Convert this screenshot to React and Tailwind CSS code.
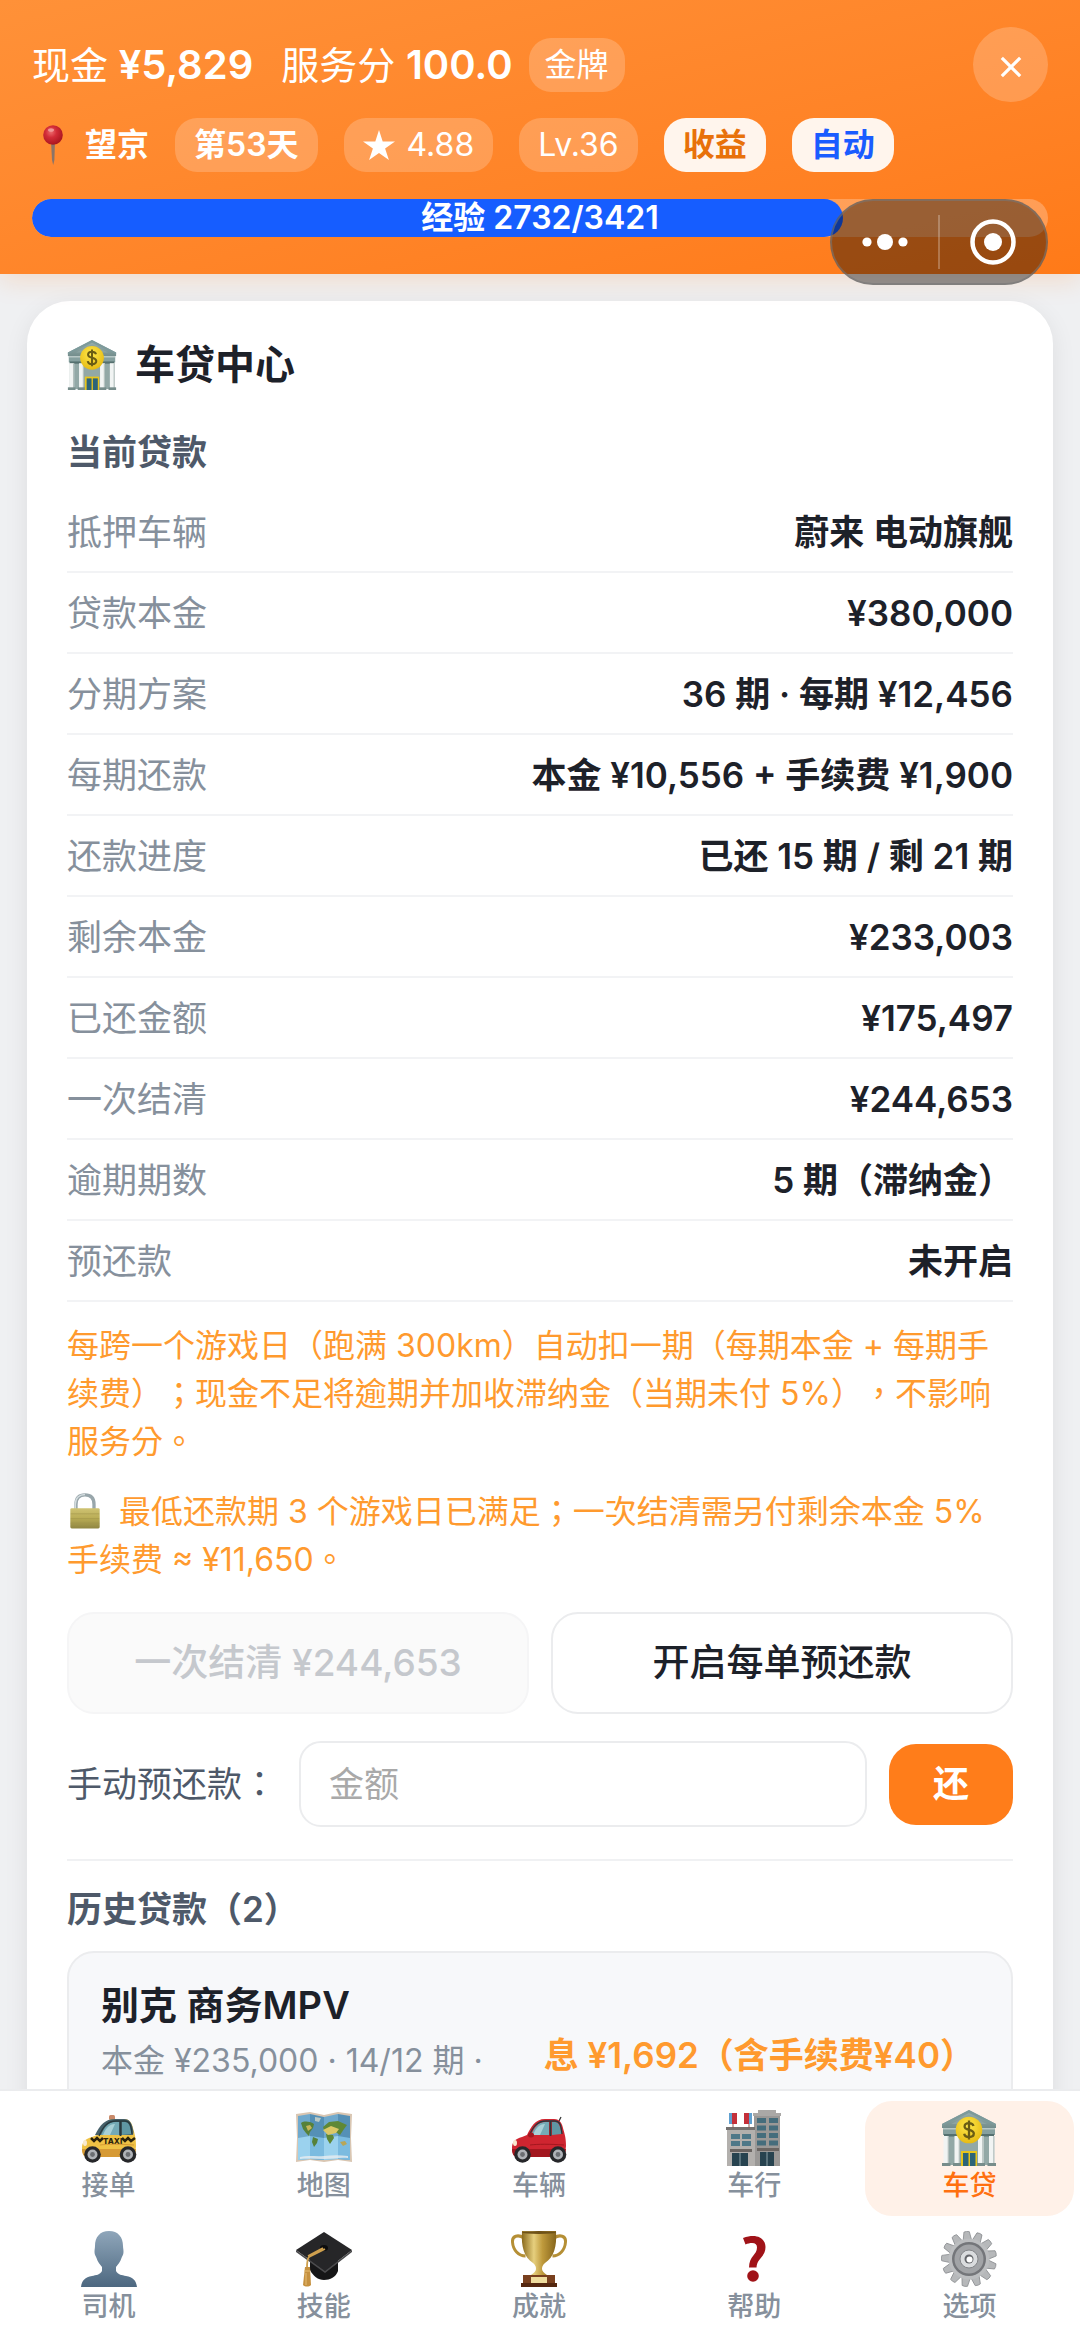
const loanRows = [
  ['抵押车辆', '蔚来 电动旗舰'],
  ['贷款本金', '¥380,000'],
  ['分期方案', '36 期 · 每期 ¥12,456'],
  ['每期还款', '本金 ¥10,556 + 手续费 ¥1,900'],
  ['还款进度', '已还 15 期 / 剩 21 期'],
  ['剩余本金', '¥233,003'],
  ['已还金额', '¥175,497'],
  ['一次结清', '¥244,653'],
  ['逾期期数', '5 期（滞纳金）'],
  ['预还款', '未开启'],
];

function PinIcon() {
  return (
    <svg viewBox="0 0 20 44" className="h-11 w-5" aria-hidden="true">
      <defs>
        <radialGradient id="pinHead" cx="40%" cy="35%" r="70%">
          <stop offset="0" stopColor="#ec6a6c" />
          <stop offset="0.4" stopColor="#d32c38" />
          <stop offset="1" stopColor="#a5121c" />
        </radialGradient>
      </defs>
      <path d="M8 18h4l-.6 19-1.200 5-1.200-5z" fill="#8a7468" />
      <circle cx="10" cy="12" r="9.800" fill="url(#pinHead)" />
      <ellipse cx="8" cy="7" rx="3" ry="1.800" fill="#f7b4b2" opacity=".7" />
    </svg>
  );
}

function StarIcon() {
  return (
    <svg viewBox="0 0 32 30" className="h-[30px] w-8" fill="currentColor" aria-hidden="true">
      <path d="m16 0 3.700 11.500H32l-9.900 7.100L25.900 30 16 23l-9.900 7 3.800-11.400L0 11.500h12.300z" />
    </svg>
  );
}

function BankIcon({ className }) {
  return (
    <svg viewBox="0 0 56 56" className={className} aria-hidden="true">
      <defs>
        <linearGradient id="bankWall" x1="0" y1="0" x2="0" y2="1">
          <stop offset="0" stopColor="#9db3b2" />
          <stop offset="1" stopColor="#748e8d" />
        </linearGradient>
        <radialGradient id="bankCoin" cx="45%" cy="35%" r="65%">
          <stop offset="0" stopColor="#ffe84a" />
          <stop offset="1" stopColor="#e6bb14" />
        </radialGradient>
      </defs>
      <path d="M28 0 55 14v4H1v-4z" fill="url(#bankWall)" />
      <path d="M28 0 55 14v2L28 3 1 16v-2z" fill="#7d9a9b" />
      <path d="M28 5 46 14H10z" fill="#8ba3a2" />
      <rect x="2" y="18" width="52" height="7" fill="#86a09f" />
      <path d="M2 18h52v1.500H2z" fill="#b7c7c5" />
      <rect x="3" y="25" width="50" height="30" fill="#92a8a6" />
      <rect x="3" y="24" width="50" height="2.500" fill="#55706f" />
      {[2.500, 13.500, 37, 48].map((x) => (
        <g key={x}>
          <rect x={x} y="26" width="5.500" height="28" fill="#f1f4f3" />
          <rect x={x + 4.200} y="26" width="1.300" height="28" fill="#b4c0be" />
          <rect x={x - 1.500} y="53" width="8.500" height="3" fill="#778d8b" />
        </g>
      ))}
      <rect x="20" y="41" width="16" height="15" fill="#e8c51c" />
      <rect x="22" y="43" width="5.500" height="13" fill="#2c6478" />
      <rect x="29" y="43" width="5.500" height="13" fill="#2c6478" />
      <circle cx="28" cy="20" r="13.300" fill="url(#bankCoin)" />
      <path d="M32.500 16c-.6-2-2.200-2.900-4.500-2.900-2.600 0-4.400 1.300-4.400 3.400 0 4.500 9.200 2.400 9.200 7.100 0 2.200-2 3.500-4.700 3.500s-4.500-1.200-4.900-3.400M28 10.500v19" fill="none" stroke="#6a5c14" strokeWidth="2.300" />
    </svg>
  );
}

function LockIcon() {
  return (
    <svg viewBox="0 0 32 38" className="mr-4 inline-block size-9 align-[-6px]" aria-hidden="true">
      <defs>
        <linearGradient id="lockBody" x1="0" y1="0" x2="0" y2="1">
          <stop offset="0" stopColor="#cfc373" />
          <stop offset="0.500" stopColor="#b9ac55" />
          <stop offset="1" stopColor="#8f8541" />
        </linearGradient>
      </defs>
      <path d="M6.500 18V12C6.500 5 10.500 2 16 2s9.500 3 9.500 10v6" fill="none" stroke="#98a6ab" strokeWidth="3.500" />
      <path d="M5.800 18V12C5.800 5 10 1.600 16 1.600" fill="none" stroke="#d3dcdf" strokeWidth="1.500" />
      <rect x="0.500" y="16" width="31" height="21.500" rx="1.500" fill="url(#lockBody)" />
      <path d="M1 22h30M1 27h30M1 32h30" stroke="#a0944a" strokeWidth="1" opacity=".6" />
    </svg>
  );
}

function CarIcon({ body, shade, taxi }) {
  return (
    <svg viewBox="0 0 56 56" className="size-14" aria-hidden="true">
      {taxi && <rect x="28" y="5" width="6" height="5" rx="1.500" fill="#c98a6a" />}
      {!taxi && <path d="m47 13 3-6" stroke="#333" strokeWidth="1.200" />}
      <path d="M1 38c0-6 3-9 10-11l5-2c4-8 8-16 18-16h9c6 0 8 4 9.500 11 1.500 5 2.500 9 2.500 16l-1 8c0 2-1 3-3 3H6c-3 0-5-4-5-9z" fill={body} />
      <path d="M1 39h54l-1 5c0 2-1 3-3 3H6c-3 0-5-3-5-8z" fill={shade} />
      {taxi && <path d="M14 25C19 15 24 9 34 9h9c6 0 8 4 9.500 13l-.5 3z" fill="#46606a" />}
      <path d="M20 25c3-7 7-13 14-13h4v13z" fill="#74aab6" />
      <path d="M22 25c3-7 6-11 12-11l-5 11z" fill="#a9d0d6" />
      <path d="M41 12h3c4 0 5 4 6.500 12l-9.500 1z" fill="#5f97a4" />
      <path d="M18 26c4-9 8-15 17-15h9c5 0 6 4 7 13" fill="none" stroke="#26393e" strokeWidth="1.300" />
      <path d="M39.500 11v15" stroke="#26393e" strokeWidth="1.800" />
      {taxi && (
        <g>
          <path d="m10 28 3 3 3-3 3 3 3-3M41 28l3 3 3-3 3 3 4-3" fill="none" stroke="#2b220b" strokeWidth="2.500" />
          <text x="22" y="34" fontSize="8" fontWeight="800" fill="#2b220b" fontFamily="Inter, sans-serif">TAXI</text>
        </g>
      )}
      <path d="M19 35c8-1 20-1 34 0" stroke={shade} fill="none" strokeWidth="1" />
      {!taxi && <ellipse cx="20" cy="25" rx="3" ry="2.500" fill={shade} />}
      <ellipse cx="4" cy="33" rx="2" ry="3" fill="#f8ead0" />
      {[11.500, 47].map((cx) => (
        <g key={cx}>
          <circle cx={cx} cy="44.500" r="8.300" fill="#26272a" />
          <circle cx={cx} cy="44.500" r="5" fill="#b0b3b8" />
          <circle cx={cx} cy="44.500" r="2.400" fill="#6b6e73" />
        </g>
      ))}
    </svg>
  );
}

function MapIcon() {
  return (
    <svg viewBox="0 0 56 56" className="size-14" aria-hidden="true">
      <path d="m0 4 14-2 14 3 14-3 14 2-1 24 1 24-14-2-14 2-14-2-14 2 1-24z" fill="#d9c6b2" />
      <path d="m2 6 12-2v45L2 50zM28 7l14-3v45l-14 1z" fill="#6fa9cd" />
      <path d="m14 4 14 3v43l-14-1zM42 4l12 2v44l-12-1z" fill="#5590b6" />
      <path d="m2 28 12-2v23L2 50zM28 28l14-2v23l-14 1z" fill="#9bd2ee" />
      <path d="m14 26 14 2v22l-14-1zM42 26l12 2v22l-12-1z" fill="#7bbbe0" />
      <path d="M5 13c3-2 8-2 13 1l-1 4-3 4-1 4-3-3-3-4zM17 27l5 2-1 4-3 4-2-5z" fill="#56813a" />
      <path d="m19 7 6 1-2 4-4-1z" fill="#b9c9c6" />
      <path d="m27 17 6-5 9-1 9 4-3 4-4 6-3-2-3-2-6 1-4-2zM30 24l7 1 1 3-4 6-3-5z" fill="#5f8836" />
      <path d="m44 32 5-1 2 3-4 2z" fill="#b8a657" />
      <path d="m27 20 8-4 8 3-3 4-8 2z" fill="#dcc867" />
      <path d="m10 16 4-1 2 3-4 3z" fill="#c6b558" />
      <path d="M4 47c8-2 16 0 24-1s16-1 24 0v2c-8-1-16 1-24 1s-16-1-24 0z" fill="#e8eef0" opacity=".8" />
    </svg>
  );
}

function StoreIcon() {
  return (
    <svg viewBox="0 0 56 56" className="size-14" aria-hidden="true">
      <rect x="28" y="3" width="26" height="53" fill="#9a9896" />
      <path d="M27 3h28v3H27zM32 0h18v3H32z" fill="#aaa8a6" />
      <rect x="1" y="19" width="28" height="37" fill="#b3b0ad" />
      <path d="M0 17h29v3H0z" fill="#74716f" />
      <path d="M3 3h23v11H3z" fill="#fff" />
      <path d="M3 3h3v11H3zM23 3h3v11h-3z" fill="#5fa0d0" />
      <path d="M6 3h5v11H6zM18 3h5v11h-5z" fill="#c4303a" />
      <path d="M7 14v4M23 14v4" stroke="#8b5a55" />
      {[8, 15.500, 23, 30.500].map((y) => (
        <path key={y} d={`M31 ${y}h9v5h-9zM43 ${y}h9v5h-9z`} fill="#456d7c" />
      ))}
      {[24, 31].map((y) => (
        <path key={y} d={`M5 ${y}h9v5H5zM16 ${y}h9v5h-9z`} fill="#4e7888" />
      ))}
      <path d="M4 39h22v3H4zM31 38h22v3H31z" fill="#6a6562" />
      <path d="M6 43h16v13H6zM34 42h14v14H34z" fill="#27434f" />
      <path d="M14 43v13M41 42v14" stroke="#8ea4ab" />
    </svg>
  );
}

function PersonIcon() {
  return (
    <svg viewBox="0 0 56 56" className="size-14" aria-hidden="true">
      <defs>
        <linearGradient id="person" x1="0" y1="0" x2="0" y2="1">
          <stop offset="0" stopColor="#8fa6ba" />
          <stop offset="1" stopColor="#4d6880" />
        </linearGradient>
      </defs>
      <path d="M28 0c9 0 14 6 14 15 0 2 .5 3 .5 6s-1.500 4-2 6c-1 4-4 7-5.500 9v4c2 4 6 4 10 5 7 1.500 10 4 11 11H0c1-7 4-9.500 11-11 4-1 8-1 10-5v-4c-1.500-2-4.500-5-5.500-9-.5-2-2-3-2-6s.5-4 .5-6c0-9 5-15 14-15z" fill="url(#person)" />
    </svg>
  );
}

function CapIcon() {
  return (
    <svg viewBox="0 0 56 56" className="size-14" aria-hidden="true">
      <path d="M14 25v14c3 6 8 10 14 10s12-3 14-9V23z" fill="#161617" />
      <path d="M28 1 56 19 29 40 0 19z" fill="#262628" />
      <path d="m0 19 29 21 27-21v2L29 42 0 21z" fill="#4b4b4d" />
      <ellipse cx="28" cy="17" rx="4" ry="3" fill="#0c0c0d" />
      <path d="M29 18 13 26c-2 2-2 7-2 11M27 17 12 25" fill="none" stroke="#cfa04e" strokeWidth="1.800" />
      <path d="M9 36h5l1 18c-2 2-6 2-8 0z" fill="#c6913f" />
      <path d="M8 40h6M10 42v12" stroke="#e6bd74" />
    </svg>
  );
}

function TrophyIcon() {
  return (
    <svg viewBox="0 0 56 56" className="size-14" aria-hidden="true">
      <defs>
        <linearGradient id="cup" x1="0" y1="0" x2="1" y2="0">
          <stop offset="0" stopColor="#8a6a1c" />
          <stop offset="0.350" stopColor="#e6cf7e" />
          <stop offset="0.600" stopColor="#bf9a3c" />
          <stop offset="1" stopColor="#86651b" />
        </linearGradient>
      </defs>
      <path d="M13 7C7 3 1 5 1.500 11c.5 8 6 14 13 14M43 7c6-4 12-2 11.500 4-.5 8-6 14-13 14" fill="none" stroke="#b58f35" strokeWidth="3" />
      <path d="M11 0h34c1 16-2 26-11 32-2 2-3 3-3 6 0 2 2 4 5 6H20c3-2 5-4 5-6 0-3-1-4-3-6C13 26 10 16 11 0z" fill="url(#cup)" />
      <ellipse cx="28" cy="1.500" rx="17" ry="1.500" fill="#6e5218" />
      <path d="M12 44h32v9H12z" fill="#79401e" />
      <path d="M10 52h36v4H10z" fill="#54270f" />
      <path d="M20 46h16v6H20z" fill="#efdc9d" />
    </svg>
  );
}

function QuestionIcon() {
  return (
    <svg viewBox="0 0 56 56" className="size-14" aria-hidden="true">
      <path d="M17 7c4-1.500 7-2 10-2 8 0 12.500 5 12.500 11 0 10-8.500 11-9 20.500h-7.500C23 25 31 24 31 16.500c0-3-1.500-4.500-5-4.500-2 0-4.500.5-6.500 1.500z" fill="#a01318" />
      <circle cx="27" cy="45" r="5.800" fill="#a01318" />
    </svg>
  );
}

function GearIcon() {
  return (
    <svg viewBox="0 0 56 56" className="size-14" aria-hidden="true">
      {Array.from({ length: 13 }, (_, i) => (
        <path key={i} d="M23.500 11 25.300.8q2.700-1 5.400 0L32.500 11z" fill="#b6b8ba" stroke="#8b8e91" strokeWidth=".8" transform={`rotate(${(i * 360) / 13 - 5} 28 28)`} />
      ))}
      <circle cx="28" cy="28" r="20.500" fill="#bcbec0" />
      <circle cx="28" cy="28" r="17" fill="#74767a" />
      <circle cx="28" cy="28" r="14.500" fill="#a2a4a7" />
      <circle cx="28" cy="28" r="9" fill="#dadcde" stroke="#85878a" />
      <circle cx="28" cy="28" r="4.500" fill="#66686c" />
      <circle cx="28.500" cy="28.500" r="3" fill="#fff" />
    </svg>
  );
}

const tabs = [
  { label: '接单', icon: <CarIcon taxi body="#efc245" shade="#d69a35" /> },
  { label: '地图', icon: <MapIcon /> },
  { label: '车辆', icon: <CarIcon body="#cf2530" shade="#a3171f" /> },
  { label: '车行', icon: <StoreIcon /> },
  { label: '车贷', icon: <BankIcon className="size-14" />, active: true },
  { label: '司机', icon: <PersonIcon /> },
  { label: '技能', icon: <CapIcon /> },
  { label: '成就', icon: <TrophyIcon /> },
  { label: '帮助', icon: <QuestionIcon /> },
  { label: '选项', icon: <GearIcon /> },
];

function Header() {
  return (
    <header className="relative z-10 bg-linear-to-br from-[#ff9138] to-[#ff7a18] px-8 pt-[27px] pb-[37px] text-white shadow-[0_6px_24px_rgba(255,122,24,0.18)]">
      <div className="flex h-[75px] items-center">
        <div className="text-[38px]">现金 <b className="text-[40px] font-semibold">¥5,829</b></div>
        <div className="ml-7 text-[38px]">服务分 <b className="text-[40px] font-semibold">100.0</b></div>
        <span className="ml-4 flex h-[54px] items-center rounded-[22px] bg-white/20 px-4 text-[32px]">金牌</span>
        <button type="button" aria-label="关闭" className="ml-auto flex size-[75px] items-center justify-center rounded-full bg-white/20">
          <svg viewBox="0 0 24 24" className="mt-1 size-[22px]" fill="none" stroke="currentColor" strokeWidth="3.500" aria-hidden="true">
            <path d="m2 2 20 20M22 2 2 22" />
          </svg>
        </button>
      </div>
      <div className="mt-4 flex h-[54px] items-center gap-[26px] text-[32px]">
        <div className="flex items-center gap-[22px] pl-[11px] font-semibold">
          <PinIcon />
          望京
        </div>
        <span className="flex h-full items-center rounded-[22px] bg-white/20 px-[19px] font-semibold">第53天</span>
        <span className="flex h-full items-center gap-3 rounded-[22px] bg-white/20 px-[19px]">
          <StarIcon />
          4.88
        </span>
        <span className="flex h-full items-center rounded-[22px] bg-white/20 px-[19px]">Lv.36</span>
        <button type="button" className="h-full rounded-[22px] bg-[#fff5ed] px-[19px] font-semibold text-[#e8710a]">收益</button>
        <button type="button" className="h-full rounded-[22px] bg-[#fff5ed] px-[19px] font-semibold text-[#1a5cff]">自动</button>
      </div>
      <div className="relative mt-[27px] h-[38px] overflow-hidden rounded-full bg-white/25">
        <div className="h-full rounded-full bg-[#165dff]" style={{ width: `${(2732 / 3421) * 100}%` }} />
        <div className="absolute inset-0 flex items-center justify-center text-[32px] leading-none font-semibold">经验 2732/3421</div>
      </div>
      {/* Mini program capsule, floats over the header edge */}
      <div className="absolute right-8 -bottom-[11px] flex h-[86px] w-[218px] items-center rounded-full border-2 border-[#777]/60 bg-black/40">
        <button type="button" aria-label="更多" className="flex flex-1 justify-center">
          <svg viewBox="0 0 46 16" className="h-4 w-[46px]" fill="currentColor" aria-hidden="true">
            <circle cx="5" cy="8" r="4.600" />
            <circle cx="23" cy="8" r="8" />
            <circle cx="41" cy="8" r="4.600" />
          </svg>
        </button>
        <span className="h-[54px] w-0.5 bg-white/25" />
        <button type="button" aria-label="退出" className="flex flex-1 justify-center">
          <svg viewBox="0 0 46 46" className="size-[46px]" aria-hidden="true">
            <circle cx="23" cy="23" r="20.500" fill="none" stroke="currentColor" strokeWidth="4.500" />
            <circle cx="23" cy="23" r="9" fill="currentColor" />
          </svg>
        </button>
      </div>
    </header>
  );
}

function CurrentLoan() {
  return (
    <section>
      <h2 className="mt-[35px] text-[35px] leading-[48px] font-semibold text-[#4e5969]">当前贷款</h2>
      <dl className="mt-4 text-[35px] leading-[48px]">
        {loanRows.map(([name, value]) => (
          <div key={name} className="flex h-[81px] items-center justify-between border-b-2 border-[#f2f3f5]">
            <dt className="text-[#86909c]">{name}</dt>
            <dd className="font-semibold text-[#1d2129]">{value}</dd>
          </div>
        ))}
      </dl>
      <div lang="zh-TW" className="mt-5 space-y-[22px] font-[Inter,'Noto_Sans_CJK_TC',sans-serif] text-[32px] leading-[48px] text-[#ff9a2e] [text-spacing-trim:space-all]">
        <p>每跨一个游戏日（跑满 300km）自动扣一期（每期本金 + 每期手续费）；现金不足将逾期并加收滞纳金（当期未付 5%），不影响服务分。</p>
        <p><LockIcon />最低还款期 3 个游戏日已满足；一次结清需另付剩余本金 5% 手续费 ≈ ¥11,650。</p>
      </div>
      <div className="mt-7 grid grid-cols-2 gap-[22px] text-[37px] font-medium">
        <button type="button" disabled className="h-[102px] rounded-[27px] border-2 border-[#f5f5f6] bg-[#fafafa] text-[#c5c8cd]">一次结清 ¥244,653</button>
        <button type="button" className="h-[102px] rounded-[27px] border-2 border-[#ebecee] bg-white text-[#1d2129]">开启每单预还款</button>
      </div>
      <div className="mt-[27px] flex items-center gap-[22px]">
        <label htmlFor="amount" lang="zh-TW" className="font-[Inter,'Noto_Sans_CJK_TC',sans-serif] text-[35px] text-[#4e5969]">手动预还款：</label>
        <input id="amount" placeholder="金额" className="h-[86px] min-w-0 flex-1 rounded-[22px] border-2 border-[#ebecee] px-7 text-[35px] placeholder:text-[#a9a9a9]" />
        <button type="button" className="h-[81px] rounded-[27px] bg-[#ff7d1a] px-11 text-[36px] font-semibold text-white">还</button>
      </div>
    </section>
  );
}

function LoanHistory() {
  return (
    <section className="mt-8 border-t-2 border-[#f0f1f3]">
      <h2 className="mt-6 text-[35px] leading-[48px] font-semibold text-[#4e5969]">历史贷款（2）</h2>
      <div className="mt-[18px] flex items-center justify-between rounded-[27px] border-2 border-[#ebecee] bg-[#f7f8fa] py-6 pr-9 pl-8">
        <div className="min-h-[156px]">
          <h3 className="text-[38px] leading-[56px] font-semibold text-[#1d2129]">别克 商务MPV</h3>
          <p className="mt-1 text-[32px] leading-[48px] text-[#86909c]">本金 ¥235,000 · 14/12 期 ·</p>
        </div>
        <div className="text-[35px] font-semibold text-[#ff9a2e]">息 ¥1,692（含手续费¥40）</div>
      </div>
    </section>
  );
}

function TabBar() {
  return (
    <nav className="relative z-10 grid shrink-0 grid-cols-5 gap-[6px] border-t-2 border-[#ebecee] bg-white pt-[10px] pr-[6px] pb-[11px] pl-1">
      {tabs.map(({ label, icon, active }) => (
        <a
          key={label}
          href="#"
          aria-current={active ? 'page' : undefined}
          className={`flex h-[115px] flex-col items-center rounded-[27px] pt-[9px] text-[27px] leading-10 font-medium ${active ? 'bg-[#fff1e8] text-[#ff7010]' : 'text-[#86909c]'}`}
        >
          {icon}
          {label}
        </a>
      ))}
    </nav>
  );
}

export default function App() {
  return (
    <div className="flex h-screen flex-col overflow-hidden bg-[#eff0f2] font-[Inter,'Noto_Sans_CJK_SC',sans-serif]">
      <Header />
      <main className="min-h-0 flex-1 overflow-hidden px-[27px] pt-[27px]">
        <div className="rounded-[43px] bg-white px-10 pt-9 pb-10 shadow-[0_6px_24px_rgba(0,0,0,0.08)]">
          <h1 className="flex items-center gap-[18px] text-[40px] leading-[56px] font-semibold text-[#1d2129]">
            <BankIcon className="size-[50px]" />
            车贷中心
          </h1>
          <CurrentLoan />
          <LoanHistory />
        </div>
      </main>
      <TabBar />
    </div>
  );
}
